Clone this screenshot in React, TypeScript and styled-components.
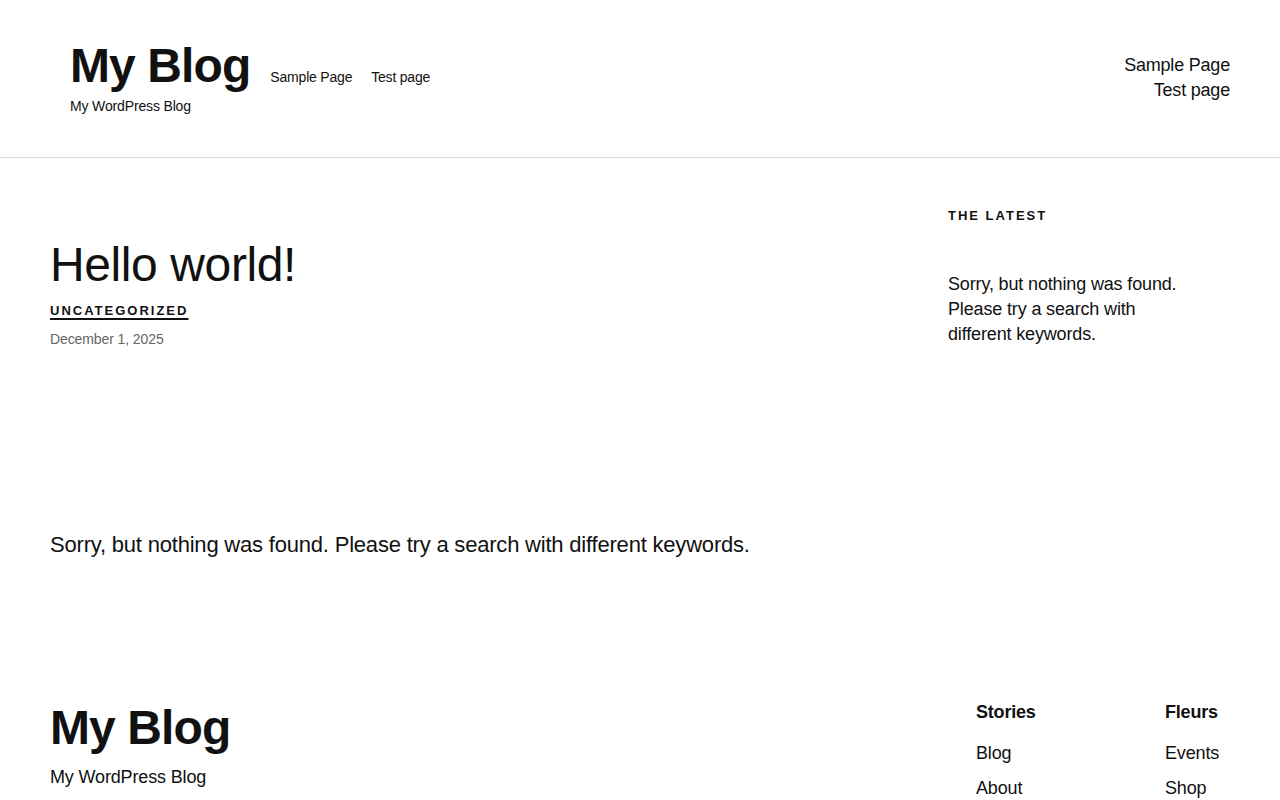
import React from "react";
import styled, { createGlobalStyle } from "styled-components";

const GlobalStyle = createGlobalStyle`
  html, body { margin: 0; padding: 0; background: #fff; }
  body {
    font-family: "Liberation Sans", Arial, sans-serif;
    color: #111;
    -webkit-font-smoothing: antialiased;
  }
  a { color: inherit; text-decoration: none; }
  * { box-sizing: border-box; }
`;

const Page = styled.div`
  width: 1280px;
  display: flex;
  flex-direction: column;
`;

const Header = styled.header`
  height: 158px;
  padding: 0 50px 0 70px;
  display: flex;
  align-items: center;
  justify-content: space-between;
  border-bottom: 1px solid #dcdcdc;
`;

const Brand = styled.div`
  margin-top: -2px;
  display: flex;
  flex-direction: column;
  gap: 4px;
`;

const BrandRow = styled.div`
  display: flex;
  align-items: baseline;
  gap: 20px;
`;

const SiteTitle = styled.a`
  font-size: 48px;
  font-weight: 700;
  line-height: 53px;
  letter-spacing: -0.9px;
`;

const Tagline = styled.div<{ $size: number; $lh: number }>`
  font-size: ${(p) => p.$size}px;
  line-height: ${(p) => p.$lh}px;
  letter-spacing: -0.15px;
`;

const InlineNav = styled.nav`
  display: flex;
  gap: 19px;
  font-size: 14px;
  line-height: 20px;
  letter-spacing: -0.2px;
`;

const StackNav = styled.nav`
  display: flex;
  flex-direction: column;
  align-items: flex-end;
  font-size: 18px;
  line-height: 25px;
  letter-spacing: -0.2px;
  margin-top: -2px;
`;

const Body = styled.div`
  display: grid;
  grid-template-columns: 1fr 282px;
  column-gap: 50px;
  padding: 0 50px;
`;

const Main = styled.main`
  padding-top: 80px;
  display: flex;
  flex-direction: column;
`;

const PostTitle = styled.h2`
  margin: 0;
  font-size: 48px;
  font-weight: 400;
  line-height: 53px;
  letter-spacing: -0.4px;
`;

const Category = styled.a`
  margin-top: 11px;
  align-self: flex-start;
  font-size: 13px;
  font-weight: 700;
  line-height: 18px;
  letter-spacing: 2px;
  text-transform: uppercase;
  text-decoration: underline;
  text-decoration-thickness: 1.5px;
  text-underline-offset: 3px;
`;

const PostDate = styled.div`
  margin-top: 9px;
  font-size: 14px;
  line-height: 20px;
  color: #666;
  letter-spacing: -0.1px;
`;

const Notice = styled.p`
  margin: 181px 0 0;
  font-size: 22px;
  line-height: 30px;
  letter-spacing: -0.2px;
`;

const Sidebar = styled.aside`
  padding-top: 49px;
  display: flex;
  flex-direction: column;
`;

const WidgetTitle = styled.h3`
  margin: 0;
  font-size: 13px;
  font-weight: 700;
  line-height: 18px;
  letter-spacing: 2px;
  text-transform: uppercase;
`;

const WidgetText = styled.p`
  margin: 47px 0 0;
  max-width: 250px;
  font-size: 18px;
  line-height: 25px;
  letter-spacing: -0.15px;
`;

const Footer = styled.footer`
  margin-top: 140px;
  padding: 0 50px 40px;
  display: flex;
  justify-content: space-between;
  align-items: flex-start;
`;

const FooterBrand = styled.div`
  margin-top: 1px;
  display: flex;
  flex-direction: column;
  gap: 11px;
`;

const FooterCols = styled.div`
  display: grid;
  grid-template-columns: 189px 65px;
`;

const FooterCol = styled.div`
  display: flex;
  flex-direction: column;
`;

const ColTitle = styled.h4`
  margin: 0 0 16px;
  font-size: 18px;
  font-weight: 700;
  line-height: 25px;
  letter-spacing: -0.2px;
`;

const ColLink = styled.a`
  font-size: 18px;
  line-height: 25px;
  margin-bottom: 10px;
  letter-spacing: -0.15px;
`;

export default function App() {
  return (
    <Page>
      <GlobalStyle />
      <Header>
        <Brand>
          <BrandRow>
            <SiteTitle href="#">My Blog</SiteTitle>
            <InlineNav>
              <a href="#">Sample Page</a>
              <a href="#">Test page</a>
            </InlineNav>
          </BrandRow>
          <Tagline $size={14} $lh={20}>My WordPress Blog</Tagline>
        </Brand>
        <StackNav>
          <a href="#">Sample Page</a>
          <a href="#">Test page</a>
        </StackNav>
      </Header>
      <Body>
        <Main>
          <PostTitle>Hello world!</PostTitle>
          <Category href="#">Uncategorized</Category>
          <PostDate>December 1, 2025</PostDate>
          <Notice>Sorry, but nothing was found. Please try a search with different keywords.</Notice>
        </Main>
        <Sidebar>
          <WidgetTitle>The Latest</WidgetTitle>
          <WidgetText>Sorry, but nothing was found. Please try a search with different keywords.</WidgetText>
        </Sidebar>
      </Body>
      <Footer>
        <FooterBrand>
          <SiteTitle href="#">My Blog</SiteTitle>
          <Tagline $size={18} $lh={25}>My WordPress Blog</Tagline>
        </FooterBrand>
        <FooterCols>
          <FooterCol>
            <ColTitle>Stories</ColTitle>
            <ColLink href="#">Blog</ColLink>
            <ColLink href="#">About</ColLink>
          </FooterCol>
          <FooterCol>
            <ColTitle>Fleurs</ColTitle>
            <ColLink href="#">Events</ColLink>
            <ColLink href="#">Shop</ColLink>
          </FooterCol>
        </FooterCols>
      </Footer>
    </Page>
  );
}
